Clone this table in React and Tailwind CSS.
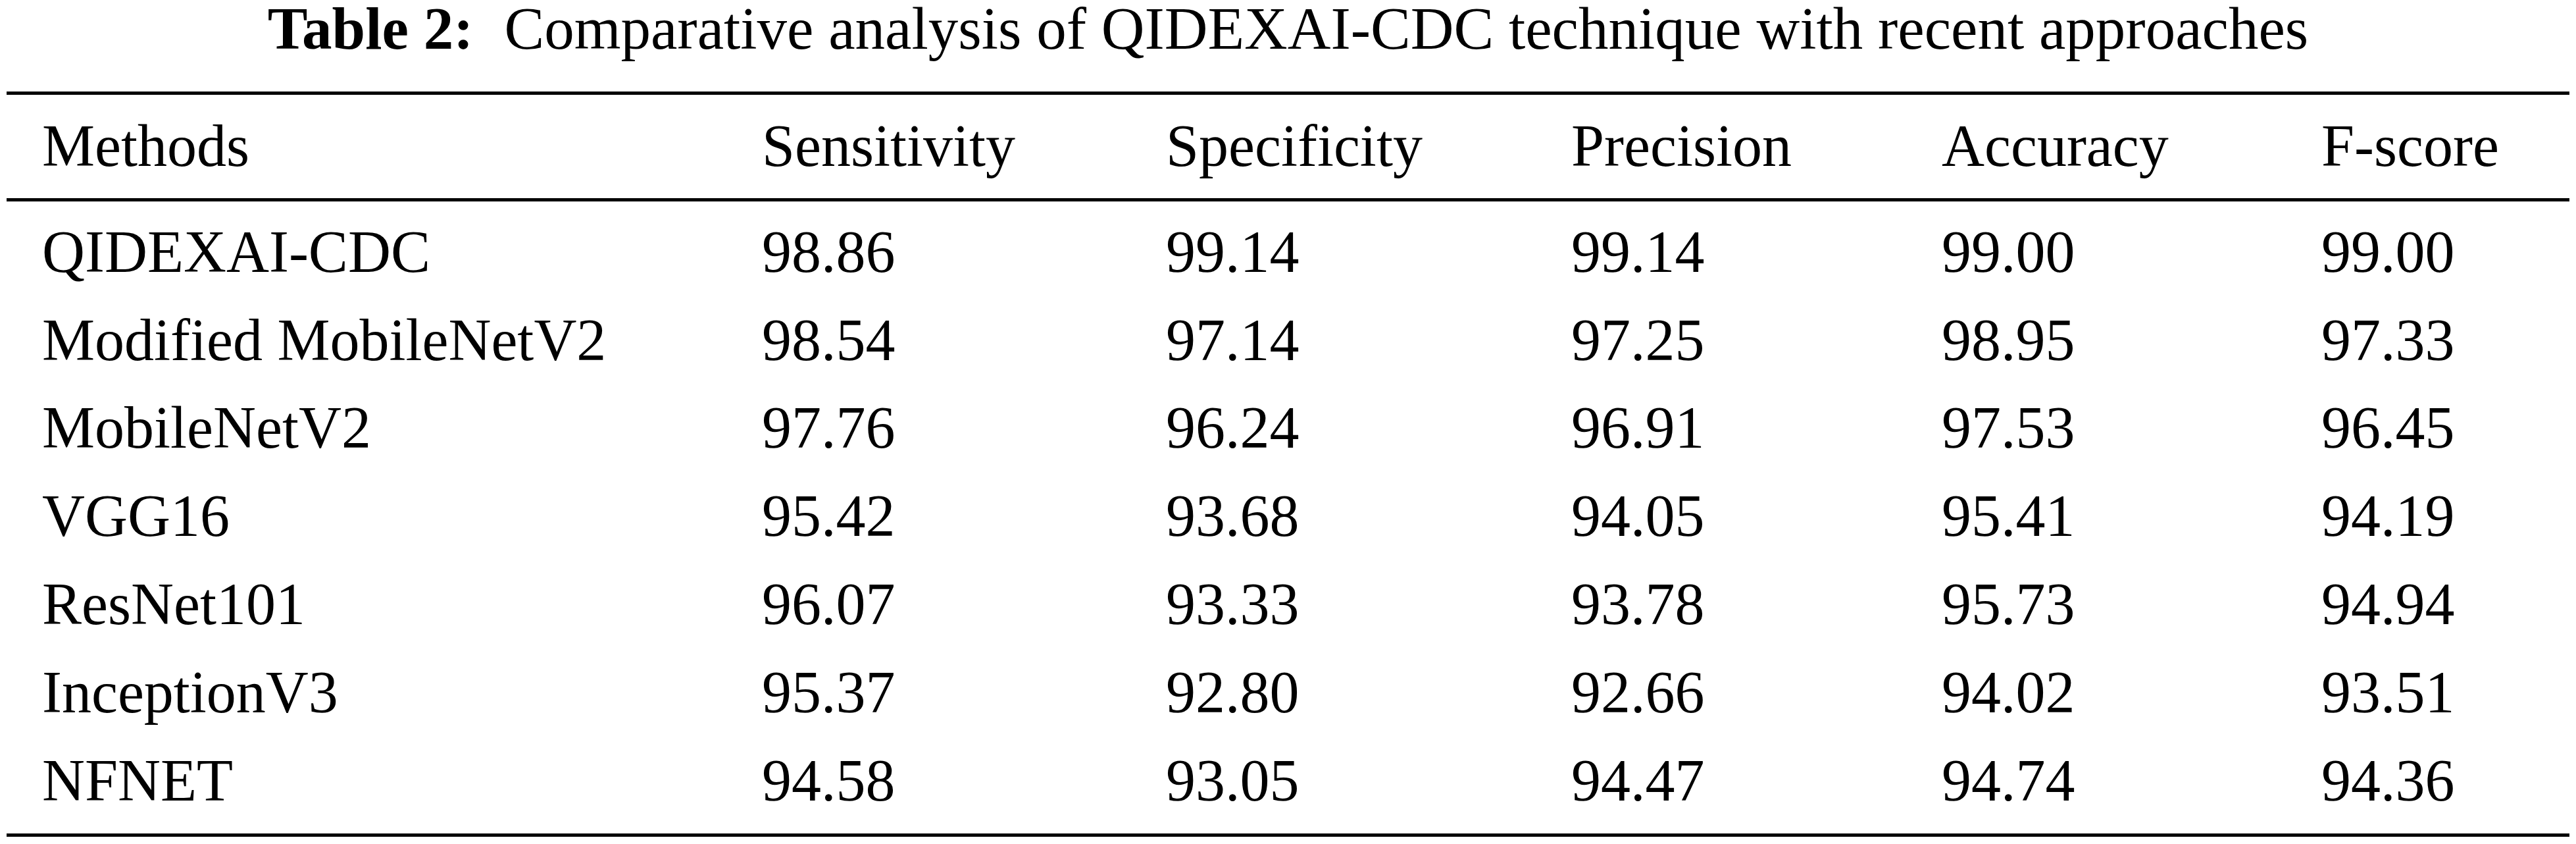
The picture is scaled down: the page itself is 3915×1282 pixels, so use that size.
import React from "react";

const rows = [
  ["QIDEXAI-CDC", "98.86", "99.14", "99.14", "99.00", "99.00"],
  ["Modified MobileNetV2", "98.54", "97.14", "97.25", "98.95", "97.33"],
  ["MobileNetV2", "97.76", "96.24", "96.91", "97.53", "96.45"],
  ["VGG16", "95.42", "93.68", "94.05", "95.41", "94.19"],
  ["ResNet101", "96.07", "93.33", "93.78", "95.73", "94.94"],
  ["InceptionV3", "95.37", "92.80", "92.66", "94.02", "93.51"],
  ["NFNET", "94.58", "93.05", "94.47", "94.74", "94.36"],
];

const head = ["Methods", "Sensitivity", "Specificity", "Precision", "Accuracy", "F-score"];

function Row({ cells }) {
  return (
    <div className="grid grid-cols-[1094px_614px_616px_563px_577px_1fr] pl-[54px] leading-[133.8px] whitespace-nowrap">
      {cells.map((c, i) => (
        <div key={i}>{c}</div>
      ))}
    </div>
  );
}

export default function App() {
  return (
    <div
      className="w-[3915px] h-[1282px] bg-white text-black px-[10px] text-[90px] overflow-hidden"
      style={{ fontFamily: '"Liberation Serif", "Times New Roman", serif' }}
    >
      <div className="text-center text-[91px] leading-[88px] whitespace-nowrap">
        <span className="font-bold">Table 2:</span>
        <span className="ml-[47px]">Comparative analysis of QIDEXAI-CDC technique with recent approaches</span>
      </div>
      <div className="mt-[51px] border-t-[5px] border-b-[5px] border-black pt-[11px] pb-[12px]">
        <Row cells={head} />
      </div>
      <div className="pt-[10px] pb-[14px] border-b-[5px] border-black">
        {rows.map((r, i) => (
          <Row key={i} cells={r} />
        ))}
      </div>
    </div>
  );
}
